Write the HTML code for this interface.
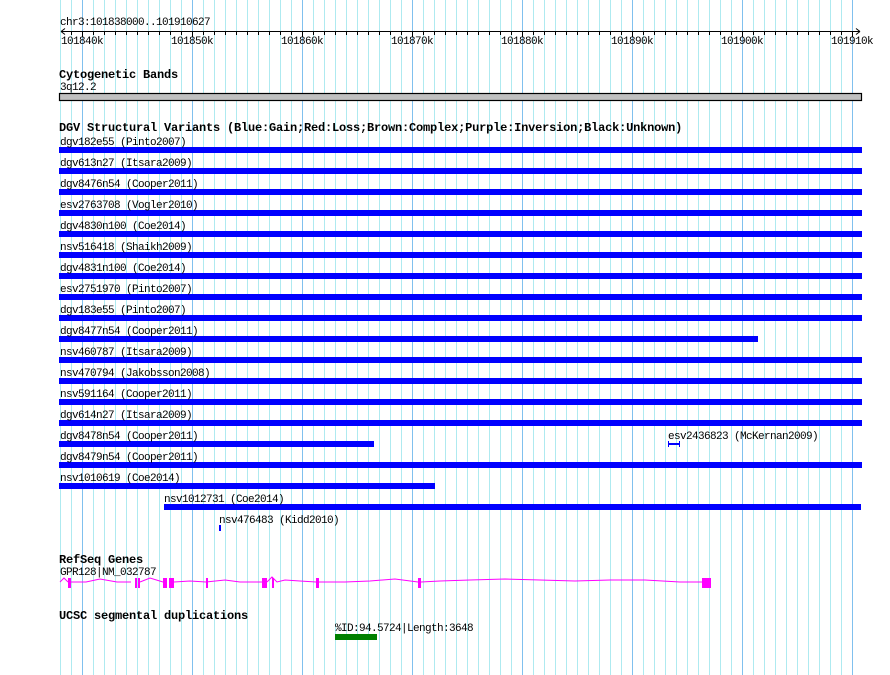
<!DOCTYPE html>
<html><head><meta charset="utf-8"><style>
html,body{margin:0;padding:0;background:#fff;}
svg{display:block}
text{font-family:"Liberation Mono",monospace;font-size:11px;letter-spacing:-0.6px;fill:#000}
.b{font-weight:bold;font-size:12px;letter-spacing:-0.2px}
</style></head><body>
<svg width="890" height="675" xmlns="http://www.w3.org/2000/svg">
<g stroke="#aeeaf0">
<path d="M60.5 0V675M71.5 0V675M82.5 0V675M93.5 0V675M104.5 0V675M115.5 0V675M126.5 0V675M137.5 0V675M148.5 0V675M159.5 0V675M170.5 0V675M181.5 0V675M192.5 0V675M203.5 0V675M214.5 0V675M225.5 0V675M236.5 0V675M247.5 0V675M258.5 0V675M269.5 0V675M280.5 0V675M291.5 0V675M302.5 0V675M313.5 0V675M324.5 0V675M335.5 0V675M346.5 0V675M357.5 0V675M368.5 0V675M379.5 0V675M390.5 0V675M401.5 0V675M412.5 0V675M423.5 0V675M434.5 0V675M445.5 0V675M456.5 0V675M467.5 0V675M478.5 0V675M489.5 0V675M500.5 0V675M511.5 0V675M522.5 0V675M533.5 0V675M544.5 0V675M555.5 0V675M566.5 0V675M577.5 0V675M588.5 0V675M599.5 0V675M610.5 0V675M621.5 0V675M632.5 0V675M643.5 0V675M654.5 0V675M665.5 0V675M676.5 0V675M687.5 0V675M698.5 0V675M709.5 0V675M720.5 0V675M731.5 0V675M742.5 0V675M753.5 0V675M764.5 0V675M775.5 0V675M786.5 0V675M797.5 0V675M808.5 0V675M819.5 0V675M830.5 0V675M841.5 0V675M852.5 0V675"/>
</g>
<g stroke="#80c0ee">
<path d="M82.5 0V675M192.5 0V675M302.5 0V675M412.5 0V675M522.5 0V675M632.5 0V675M742.5 0V675M852.5 0V675"/>
</g>
<!-- ruler -->
<text x="60" y="25">chr3:101838000..101910627</text>
<path d="M61 31.5H860M61 31.5l4-3M61 31.5l4 3M860 31.5l-4-3M860 31.5l-4 3" stroke="#000" fill="none"/>
<path stroke="#000" d="M71.5 31V35M82.5 31V37M93.5 31V35M104.5 31V35M115.5 31V35M126.5 31V35M137.5 31V35M148.5 31V35M159.5 31V35M170.5 31V35M181.5 31V35M192.5 31V37M203.5 31V35M214.5 31V35M225.5 31V35M236.5 31V35M247.5 31V35M258.5 31V35M269.5 31V35M280.5 31V35M291.5 31V35M302.5 31V37M313.5 31V35M324.5 31V35M335.5 31V35M346.5 31V35M357.5 31V35M368.5 31V35M379.5 31V35M390.5 31V35M401.5 31V35M412.5 31V37M423.5 31V35M434.5 31V35M445.5 31V35M456.5 31V35M467.5 31V35M478.5 31V35M489.5 31V35M500.5 31V35M511.5 31V35M522.5 31V37M533.5 31V35M544.5 31V35M555.5 31V35M566.5 31V35M577.5 31V35M588.5 31V35M599.5 31V35M610.5 31V35M621.5 31V35M632.5 31V37M643.5 31V35M654.5 31V35M665.5 31V35M676.5 31V35M687.5 31V35M698.5 31V35M709.5 31V35M720.5 31V35M731.5 31V35M742.5 31V37M753.5 31V35M764.5 31V35M775.5 31V35M786.5 31V35M797.5 31V35M808.5 31V35M819.5 31V35M830.5 31V35M841.5 31V35M852.5 31V37"/>
<g text-anchor="middle">
<text x="82" y="44">101840k</text><text x="192" y="44">101850k</text><text x="302" y="44">101860k</text><text x="412" y="44">101870k</text><text x="522" y="44">101880k</text><text x="632" y="44">101890k</text><text x="742" y="44">101900k</text><text x="852" y="44">101910k</text>
</g>
<!-- cytoband -->
<text class="b" x="59" y="78">Cytogenetic Bands</text>
<text x="60" y="90">3q12.2</text>
<rect x="59.5" y="93.5" width="802" height="7" fill="#c0c0c0" stroke="#000" stroke-width="1.2"/>
<!-- DGV -->
<text class="b" x="59" y="131">DGV Structural Variants (Blue:Gain;Red:Loss;Brown:Complex;Purple:Inversion;Black:Unknown)</text>
<g fill="#0000ff">
<rect x="59" y="147" width="803" height="6"/>
<rect x="59" y="168" width="803" height="6"/>
<rect x="59" y="189" width="803" height="6"/>
<rect x="59" y="210" width="803" height="6"/>
<rect x="59" y="231" width="803" height="6"/>
<rect x="59" y="252" width="803" height="6"/>
<rect x="59" y="273" width="803" height="6"/>
<rect x="59" y="294" width="803" height="6"/>
<rect x="59" y="315" width="803" height="6"/>
<rect x="59" y="336" width="699" height="6"/>
<rect x="59" y="357" width="803" height="6"/>
<rect x="59" y="378" width="803" height="6"/>
<rect x="59" y="399" width="803" height="6"/>
<rect x="59" y="420" width="803" height="6"/>
<rect x="59" y="441" width="315" height="6"/>
<rect x="59" y="462" width="803" height="6"/>
<rect x="59" y="483" width="376" height="6"/>
<rect x="164" y="504" width="697" height="6"/>
<rect x="219" y="525" width="2" height="6"/>
<rect x="668" y="441" width="1" height="6"/><rect x="679" y="441" width="1" height="6"/><rect x="668" y="443" width="12" height="2"/>
</g>
<text x="60" y="145">dgv182e55 (Pinto2007)</text>
<text x="60" y="166">dgv613n27 (Itsara2009)</text>
<text x="60" y="187">dgv8476n54 (Cooper2011)</text>
<text x="60" y="208">esv2763708 (Vogler2010)</text>
<text x="60" y="229">dgv4830n100 (Coe2014)</text>
<text x="60" y="250">nsv516418 (Shaikh2009)</text>
<text x="60" y="271">dgv4831n100 (Coe2014)</text>
<text x="60" y="292">esv2751970 (Pinto2007)</text>
<text x="60" y="313">dgv183e55 (Pinto2007)</text>
<text x="60" y="334">dgv8477n54 (Cooper2011)</text>
<text x="60" y="355">nsv460787 (Itsara2009)</text>
<text x="60" y="376">nsv470794 (Jakobsson2008)</text>
<text x="60" y="397">nsv591164 (Cooper2011)</text>
<text x="60" y="418">dgv614n27 (Itsara2009)</text>
<text x="60" y="439">dgv8478n54 (Cooper2011)</text>
<text x="668" y="439">esv2436823 (McKernan2009)</text>
<text x="60" y="460">dgv8479n54 (Cooper2011)</text>
<text x="60" y="481">nsv1010619 (Coe2014)</text>
<text x="164" y="502">nsv1012731 (Coe2014)</text>
<text x="219" y="523">nsv476483 (Kidd2010)</text>
<!-- RefSeq -->
<text class="b" x="59" y="563">RefSeq Genes</text>
<text x="60" y="575">GPR128|NM_032787</text>
<g stroke="#ff00ff" fill="none">
<path d="M60 582L64 578L68 582M71 582L86 582L100 579L117 582L131 582M140 582L150 578L163 582M174 582L190 581L206 582L225 580L240 582L262 582M267 582L272 577L277 582L285 580L300 581L316 582M319 582L345 582L370 581L395 579L418 582M421 582L440 581L470 580L505 579L540 580L575 581L610 580L645 580L680 582L702 582"/>
</g>
<g fill="#ff00ff">
<rect x="68" y="578" width="3" height="10"/>
<rect x="135" y="578" width="2" height="10"/><rect x="138" y="578" width="2" height="10"/>
<rect x="163" y="578" width="4" height="10"/><rect x="169" y="578" width="5" height="10"/>
<rect x="206" y="578" width="2" height="10"/>
<rect x="262" y="578" width="5" height="10"/>
<rect x="272" y="578" width="2" height="10"/>
<rect x="316" y="578" width="3" height="10"/>
<rect x="418" y="578" width="3" height="10"/>
<rect x="702" y="578" width="9" height="10"/>
</g>
<!-- segdup -->
<text class="b" x="59" y="619">UCSC segmental duplications</text>
<text x="335" y="631">%ID:94.5724|Length:3648</text>
<rect x="335" y="634" width="42" height="6" fill="#008000"/>
</svg>
</body></html>
